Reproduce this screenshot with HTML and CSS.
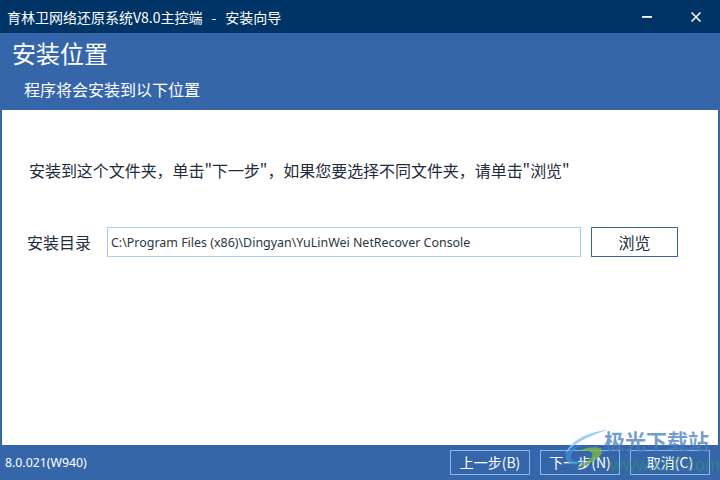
FILE: index.html
```html
<!DOCTYPE html>
<html lang="zh-CN">

<head>
    <meta charset="UTF-8">
    <title>安装向导</title>
    <link rel="stylesheet" href="styles.css">
</head>

<body>

    <div class="window">
        <div class="titlebar">
            <div class="title">育林卫网络还原系统V8.0主控端<span class="sep">-</span>安装向导</div>
            <div class="winbtns">
                <div class="min"></div>
                <svg class="close" width="10" height="10" viewBox="0 0 10 10">
                    <path d="M0.5 0.5L9.5 9.5M9.5 0.5L0.5 9.5" stroke="#fff" stroke-width="1.5" fill="none" />
                </svg>
            </div>
        </div>

        <div class="head">
            <div class="head-title">安装位置</div>
            <div class="head-sub">程序将会安装到以下位置</div>
        </div>

        <div class="content">
            <p class="hint">安装到这个文件夹，单击"下一步"，如果您要选择不同文件夹，请单击"浏览"</p>
            <div class="dir-row">
                <label class="dir-label">安装目录</label>
                <div class="dir-input">C:\Program Files (x86)\Dingyan\YuLinWei NetRecover Console</div>
                <div class="browse">浏览</div>
            </div>
        </div>

        <div class="footer">
            <div class="version">8.0.021(W940)</div>
            <div class="footer-btns">
                <div class="btn">上一步(B)</div>
                <div class="btn">下一步(N)</div>
                <div class="btn">取消(C)</div>
            </div>
        </div>
    </div>

    <!-- watermark on top of the corner -->
    <div class="wm-logo">
        <svg width="50" height="44" viewBox="0 0 50 44">
            <path d="M48 2C30 3 10 12 5 27C12 16 28 8 48 2Z" fill="#8cc8ee" opacity="0.85" />
            <path d="M22 17C10 19 3 27 7 33C11 38 20 37 25 33C19 35 12 34 11 30C10 25 15 20 22 17Z" fill="#3c8ed2" opacity="0.8" />
            <path d="M16 24C24 19 38 18 42 21C44 27 34 36 14 41C28 34 34 29 32 25C29 22 22 22 16 24Z" fill="#79b648" opacity="0.8" />
        </svg>
    </div>
    <div class="wm-name">极光下载站</div>
    <div class="wm-url">www.xz7.com</div>

</body>

</html>
```

FILE: styles.css
```css
html, body {
    margin: 0;
    padding: 0;
}

body {
    width: 720px;
    height: 480px;
    overflow: hidden;
    position: relative;
    font-family: "Noto Sans CJK SC", "Liberation Sans", sans-serif;
}

.window {
    width: 720px;
    height: 480px;
    display: flex;
    flex-direction: column;
    background: #3566aa;
}

.titlebar {
    height: 33px;
    background: #003366;
    color: #fff;
    font-size: 14px;
    display: flex;
    justify-content: space-between;
    align-items: center;
    padding-left: 7px;
    flex-shrink: 0;
}

.sep {
    margin: 0 9px;
}

.winbtns {
    display: flex;
    align-items: center;
    gap: 39px;
    padding-right: 19px;
}

.min {
    width: 10px;
    height: 2px;
    background: #fff;
    border-bottom: 1px solid #c9d6e6;
    box-sizing: border-box;
}

.close {
    display: block;
}

.head {
    height: 77px;
    color: #fff;
    flex-shrink: 0;
    padding-left: 12px;
}

.head-title {
    font-size: 24px;
    line-height: 36px;
    padding-top: 2px;
}

.head-sub {
    font-size: 16px;
    line-height: 20px;
    padding: 8px 0 0 12px;
}

.content {
    flex: 1;
    background: #fff;
    margin: 0 2px;
    color: #1e2c3c;
    padding-top: 49px;
}

.hint {
    margin: 0;
    font-size: 16px;
    line-height: 22px;
    letter-spacing: -0.05px;
    padding-left: 27px;
}

.dir-row {
    display: flex;
    align-items: center;
    margin-top: 46px;
    padding-left: 25px;
}

.dir-label {
    font-size: 16px;
    width: 80px;
}

.dir-input {
    width: 474px;
    height: 30px;
    box-sizing: border-box;
    border: 1px solid #a9cdec;
    font-size: 12.45px;
    line-height: 30px;
    padding-left: 3px;
    font-family: "Noto Sans", sans-serif;
    color: #2a3644;
}

.browse {
    width: 87px;
    height: 30px;
    box-sizing: border-box;
    border: 1px solid #3566aa;
    margin-left: 10px;
    font-size: 16px;
    line-height: 28px;
    text-align: center;
}

.footer {
    height: 35px;
    flex-shrink: 0;
    display: flex;
    justify-content: space-between;
    align-items: center;
    color: #fff;
}

.version {
    font-size: 12.3px;
    padding-left: 5px;
    font-family: "Noto Sans", sans-serif;
}

.footer-btns {
    display: flex;
    gap: 10px;
    padding-right: 10px;
}

.btn {
    width: 80px;
    height: 25px;
    box-sizing: border-box;
    border: 1px solid #8fb4e6;
    font-size: 14px;
    line-height: 23px;
    text-align: center;
}

.wm-logo {
    position: absolute;
    left: 560px;
    top: 428px;
}

.wm-logo svg {
    display: block;
}

.wm-name {
    position: absolute;
    left: 604px;
    top: 425px;
    font-size: 21px;
    line-height: 30px;
    font-weight: 700;
    color: rgba(70, 125, 190, 0.75);
}

.wm-url {
    position: absolute;
    left: 610px;
    top: 455px;
    font-size: 18px;
    line-height: 20px;
    color: rgba(50, 150, 110, 0.55);
    font-family: "Liberation Sans", sans-serif;
}
```
